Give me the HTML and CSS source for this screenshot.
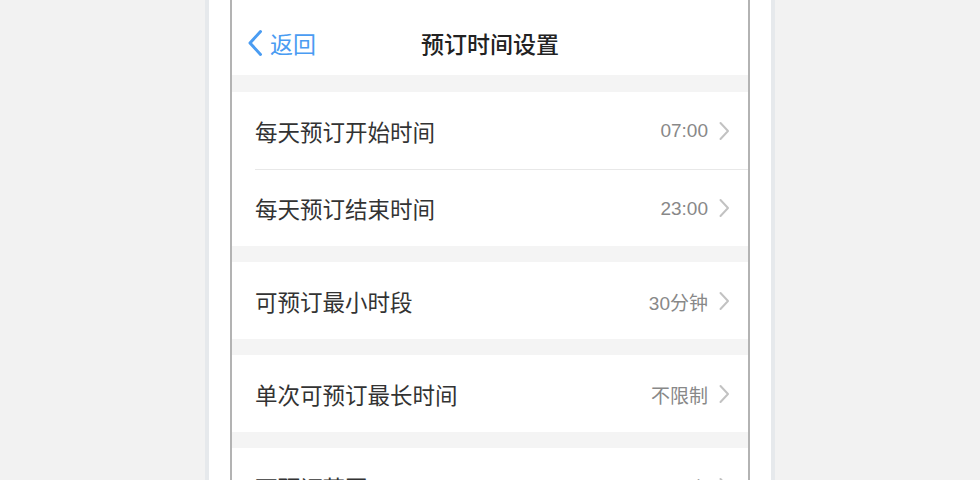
FILE: index.html
```html
<!doctype html>
<html lang="zh-CN">
    <head>
        <meta charset="UTF-8" />
        <meta name="viewport" content="width=device-width, initial-scale=1.0" />
        <title>预订时间设置</title>
        <link rel="stylesheet" href="styles.css">
    </head>
    <body>
        <div class="device">
            <div class="screen">
                <!-- Nav bar -->
                <div class="navbar">
                    <a class="back" href="#">
                        <svg width="18" height="28" viewBox="0 0 18 28">
                            <path d="M14.5 2.5 L4 14 L14.5 25.5" fill="none" stroke="#4a9cf2" stroke-width="3" stroke-linecap="round" stroke-linejoin="round" />
                        </svg>
                        <span>返回</span>
                    </a>
                    <h1 class="title">预订时间设置</h1>
                </div>

                <div class="group">
                    <div class="cell">
                        <span class="label">每天预订开始时间</span>
                        <span class="value">07:00</span>
                        <svg class="arrow" width="12" height="20" viewBox="0 0 12 20"><path d="M2.5 2 L10 10 L2.5 18" /></svg>
                    </div>
                    <div class="cell">
                        <span class="label">每天预订结束时间</span>
                        <span class="value">23:00</span>
                        <svg class="arrow" width="12" height="20" viewBox="0 0 12 20"><path d="M2.5 2 L10 10 L2.5 18" /></svg>
                    </div>
                </div>

                <div class="group">
                    <div class="cell">
                        <span class="label">可预订最小时段</span>
                        <span class="value">30分钟</span>
                        <svg class="arrow" width="12" height="20" viewBox="0 0 12 20"><path d="M2.5 2 L10 10 L2.5 18" /></svg>
                    </div>
                </div>

                <div class="group">
                    <div class="cell">
                        <span class="label">单次可预订最长时间</span>
                        <span class="value">不限制</span>
                        <svg class="arrow" width="12" height="20" viewBox="0 0 12 20"><path d="M2.5 2 L10 10 L2.5 18" /></svg>
                    </div>
                </div>

                <div class="group">
                    <div class="cell">
                        <span class="label">可预订范围</span>
                        <span class="value">30天内</span>
                        <svg class="arrow" width="12" height="20" viewBox="0 0 12 20"><path d="M2.5 2 L10 10 L2.5 18" /></svg>
                    </div>
                </div>
            </div>
        </div>
    </body>
</html>
```

FILE: styles.css
```css
body {
    margin: 0;
    height: 100vh;
    overflow: hidden;
    background: #f2f2f2;
    font-family: "Liberation Sans", "Noto Sans CJK SC", sans-serif;
}

.device {
    width: 520px;
    margin: 0 auto;
    min-height: 100vh;
    padding: 0 21px;
    background: #fff;
    border-left: 4px solid #e6e9ec;
    border-right: 4px solid #e6e9ec;
}

.screen {
    min-height: 100vh;
    background: #f4f4f4;
    border-left: 2px solid #b3b3b3;
    border-right: 2px solid #b3b3b3;
}

.navbar {
    position: relative;
    height: 75px;
    padding-top: 10px;
    box-sizing: border-box;
    display: flex;
    align-items: center;
    justify-content: center;
    background: #fff;
}

.back {
    position: absolute;
    left: 14px;
    top: 10px;
    bottom: 0;
    display: flex;
    align-items: center;
    gap: 6px;
    color: #4a9cf2;
    text-decoration: none;
    font-size: 23px;
}

.title {
    margin: 0;
    font-size: 23px;
    font-weight: 500;
    color: #222;
}

.group {
    margin-top: 16px;
    background: #fff;
}

.navbar + .group {
    margin-top: 17px;
}

.cell {
    height: 77px;
    margin-left: 23px;
    padding-right: 18px;
    display: flex;
    align-items: center;
    box-sizing: border-box;
}

.cell + .cell {
    border-top: 1px solid #e8e8e8;
}

.label {
    flex: 1;
    font-size: 22.5px;
    color: #333;
}

.value {
    font-size: 19px;
    color: #888;
    margin-right: 10px;
    padding-top: 1px;
}

.arrow path {
    fill: none;
    stroke: #c2c2c2;
    stroke-width: 2;
    stroke-linecap: round;
    stroke-linejoin: round;
}
```
